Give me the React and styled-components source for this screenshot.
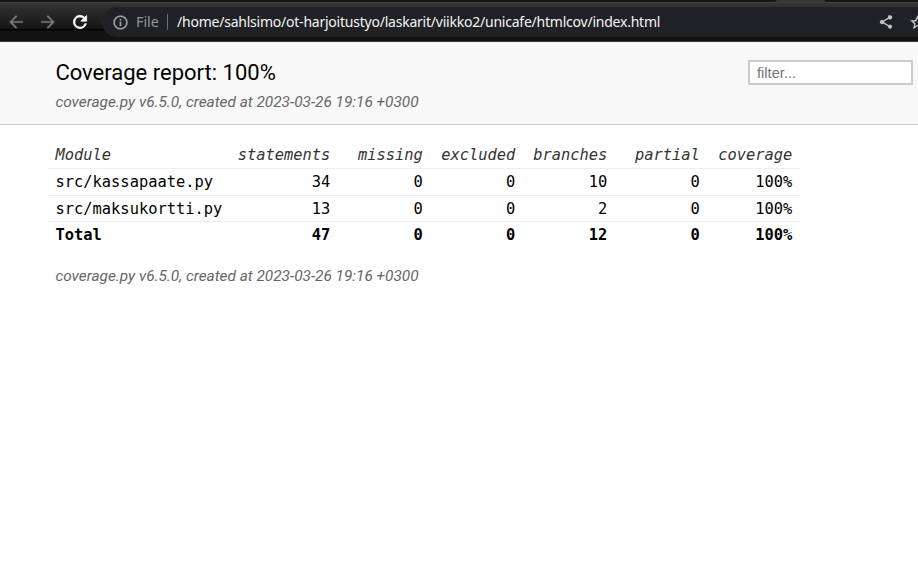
import React from "react";
import styled, { createGlobalStyle } from "styled-components";

const GlobalStyle = createGlobalStyle`
  * { box-sizing: border-box; }
  html, body { margin: 0; background: #fff; overflow: hidden; }
  body { font-family: Roboto, "Noto Sans", sans-serif; color: #000; }
`;

const Page = styled.div`
  width: 100%;
  height: 568px;
  overflow: hidden;
`;

const Browser = styled.div`
  height: 42px;
  background: linear-gradient(#383838 0, #141414 29px, #030303 29px, #030303 30px, #121212 31px, #121212 100%);
  border-bottom: 1px solid #363636;
`;

const TabEdge = styled.div`
  display: flex;
  justify-content: flex-end;
  height: 3px;
  padding-right: 92px;
  background: #141414;
  border-bottom: 1px solid #444;
`;

const ActiveTab = styled.div`
  width: 51px;
  height: 3px;
  background: #383838;
  border-radius: 3px 3px 0 0;
`;

const Toolbar = styled.div`
  display: flex;
  align-items: center;
  height: 38px;
  padding-left: 6px;
`;

const NavIcon = styled.svg`
  flex: none;
  width: 20px;
  height: 20px;
  margin-right: 12px;
  fill: ${(p) => (p.$active ? "#fff" : "#767676")};
  stroke: ${(p) => (p.$active ? "#fff" : "#767676")};
  stroke-width: ${(p) => (p.$active ? 0.8 : 0.3)};
`;

const AddressBar = styled.div`
  display: flex;
  align-items: center;
  flex: 1;
  height: 30px;
  min-width: 0;
  margin: 0 -20px 0 0;
  padding-left: 9.5px;
  background: #202124;
  border-radius: 15px 0 0 15px;
  overflow: hidden;
`;

const BarIcon = styled.svg`
  flex: none;
  width: ${(p) => p.$size}px;
  height: ${(p) => p.$size}px;
  margin-left: ${(p) => p.$gap || 0}px;
  fill: ${(p) => p.$tone};
  stroke: ${(p) => p.$tone};
  stroke-width: 0.4;
`;

const Scheme = styled.span`
  flex: none;
  width: 32px;
  margin-left: 7.5px;
  border-right: 1px solid #6c6d70;
  font: 14.3px/16px "Noto Sans", sans-serif;
  color: #969799;
  white-space: nowrap;
`;

const Url = styled.span`
  flex: none;
  width: 710px;
  padding-left: 9px;
  font: 14px/20px "Noto Sans", sans-serif;
  letter-spacing: -0.227px;
  color: #f4f4f4;
  white-space: nowrap;
`;

const Header = styled.header`
  display: flex;
  justify-content: space-between;
  height: 83px;
  padding: 18px 5px 0 55.4px;
  background: #f8f8f8;
  border-bottom: 1px solid #ccc;
`;

const Title = styled.h1`
  margin: 0;
  font-size: 22px;
  line-height: 26px;
  font-weight: 400;
`;

const Meta = styled.p`
  margin: ${(p) => p.$top}px 0 0;
  font-size: 15.4px;
  line-height: 18px;
  font-style: italic;
  color: #666;
`;

const Filter = styled.input`
  width: 165px;
  height: 25px;
  padding: 0 7px;
  border: 2px solid #ccc;
  border-radius: 0;
  outline: 0;
  background: #fff;
  font: 14.7px "Liberation Sans", Arial, sans-serif;
  &::placeholder { color: #757575; }
`;

const Main = styled.main`
  padding: 17px 0 0 48px;
`;

const Table = styled.table`
  width: 752px;
  table-layout: fixed;
  border-collapse: separate;
  border-spacing: 0;
  font: 15.4px/18px "DejaVu Sans Mono", monospace;
`;

const Row = styled.tr`
  height: ${(p) => p.$height}px;
  font-weight: ${(p) => (p.$total ? 700 : 400)};
`;

const Cell = styled.td`
  width: ${(p) => p.$width}px;
  padding: 0 7.7px 0 7.5px;
  vertical-align: middle;
  text-align: ${(p) => (p.$left ? "left" : "right")};
  border-bottom: ${(p) => (p.$plain ? "0" : "1px solid #eee")};
`;

const HeadCell = styled(Cell)`
  font-weight: 400;
  font-style: italic;
  color: #333;
`;

const Footer = styled.footer`
  padding-left: 7.4px;
`;

const columns = [
  ["Module", 181.5], ["statements", 108.5], ["missing", 92.5], ["excluded", 92.5],
  ["branches", 92], ["partial", 92.5], ["coverage", 92.5],
];
const rows = [
  { height: 27, cells: ["src/kassapaate.py", 34, 0, 0, 10, 0, "100%"] },
  { height: 26, cells: ["src/maksukortti.py", 13, 0, 0, 2, 0, "100%"] },
  { height: 26, total: true, cells: ["Total", 47, 0, 0, 12, 0, "100%"] },
];
const created = "coverage.py v6.5.0, created at 2023-03-26 19:16 +0300";

export default function App() {
  return (
    <Page>
      <GlobalStyle />
      <Browser>
        <TabEdge><ActiveTab /></TabEdge>
        <Toolbar>
          <NavIcon viewBox="0 0 24 24"><path d="M20 11H7.83l5.59-5.59L12 4l-8 8 8 8 1.41-1.41L7.83 13H20z" /></NavIcon>
          <NavIcon viewBox="0 0 24 24"><path d="m12 4-1.41 1.41L16.17 11H4v2h12.17l-5.58 5.59L12 20l8-8z" /></NavIcon>
          <NavIcon $active viewBox="0 0 24 24"><path d="M17.65 6.35A8 8 0 1 0 19.73 14h-2.08A6 6 0 1 1 12 6c1.66 0 3.14.69 4.22 1.78L13 11h7V4z" /></NavIcon>
          <AddressBar>
            <BarIcon $size={17} $tone="#a0a1a4" viewBox="0 0 24 24"><path d="M11 7h2v2h-2zm0 4h2v6h-2zm1-9a10 10 0 1 0 0 20 10 10 0 0 0 0-20m0 18a8 8 0 1 1 0-16 8 8 0 0 1 0 16" /></BarIcon>
            <Scheme>File</Scheme>
            <Url>/home/sahlsimo/ot-harjoitustyo/laskarit/viikko2/unicafe/htmlcov/index.html</Url>
            <BarIcon $size={16} $tone="#c7c8ca" viewBox="0 0 24 24"><path d="M18 16.08c-.76 0-1.44.3-1.96.77L8.91 12.7a3.3 3.3 0 0 0 0-1.4l7.05-4.11A3 3 0 1 0 15 5c0 .24.04.47.09.7L8.04 9.81a3 3 0 1 0 0 4.38l7.12 4.16a2.92 2.92 0 1 0 2.84-2.27" /></BarIcon>
            <BarIcon $size={17} $gap={15} $tone="#c7c8ca" viewBox="0 0 24 24"><path d="m22 9.24-7.19-.62L12 2 9.19 8.63 2 9.24l5.46 4.73L5.82 21 12 17.27 18.18 21l-1.63-7.03zM12 15.4l-3.76 2.27 1-4.28-3.32-2.88 4.38-.38L12 6.1l1.71 4.04 4.38.38-3.32 2.88 1 4.28z" /></BarIcon>
          </AddressBar>
        </Toolbar>
      </Browser>
      <Header>
        <div>
          <Title>Coverage report: 100%</Title>
          <Meta $top={7}>{created}</Meta>
        </div>
        <Filter placeholder="filter..." />
      </Header>
      <Main>
        <Table>
          <thead>
            <Row $height={27}>
              {columns.map(([label, width], i) => (
                <HeadCell as="th" key={label} $width={width} $left={i === 0}>{label}</HeadCell>
              ))}
            </Row>
          </thead>
          <tbody>
            {rows.map((row) => (
              <Row key={row.cells[0]} $height={row.height} $total={row.total}>
                {row.cells.map((value, i) => (
                  <Cell key={columns[i][0]} $left={i === 0} $plain={row.total}>{value}</Cell>
                ))}
              </Row>
            ))}
          </tbody>
        </Table>
        <Footer><Meta $top={19}>{created}</Meta></Footer>
      </Main>
    </Page>
  );
}
